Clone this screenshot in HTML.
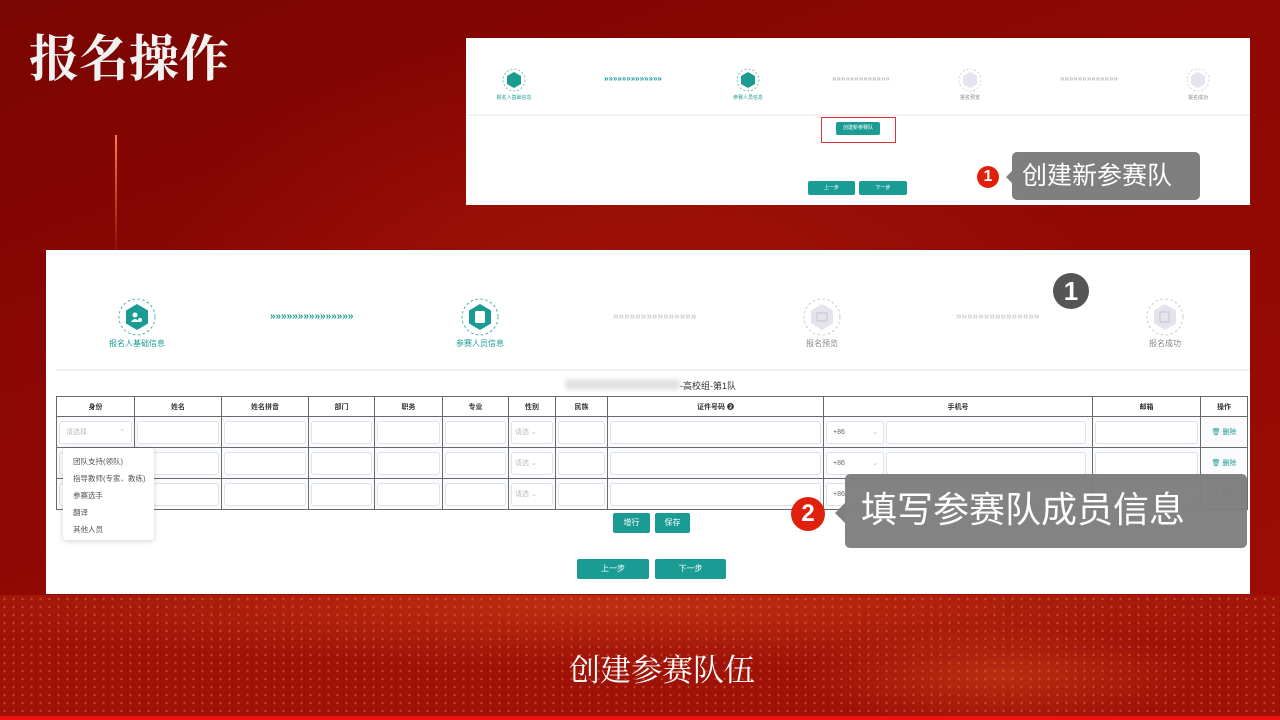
<!DOCTYPE html>
<html><head><meta charset="utf-8"><style>
*{margin:0;padding:0;box-sizing:border-box}
body{width:1280px;height:720px;overflow:hidden;position:relative;font-family:"Liberation Sans","Noto Sans CJK SC",sans-serif;
background:radial-gradient(ellipse 500px 300px at 640px 330px,#a31408 0%,rgba(163,20,8,0) 100%),linear-gradient(160deg,#7a0502 0%,#8e0803 40%,#960a03 70%,#a00e04 100%);}
.a{position:absolute}
.glow{left:0;top:595px;width:1280px;height:121px;background:radial-gradient(ellipse 700px 60px at 620px 10px,rgba(230,80,30,.45),rgba(0,0,0,0)),radial-gradient(ellipse 200px 50px at 1000px 80px,rgba(240,110,40,.3),rgba(0,0,0,0)),#9e1208;}
.dots{left:0;top:595px;width:1280px;height:121px;background-image:radial-gradient(circle,rgba(255,160,80,.7) 0.8px,rgba(0,0,0,0) 1.5px);background-size:9px 8px;opacity:.5}
.panel{background:#fff}
.teal{background:#1a9c95;color:#fff;border-radius:2px;text-align:center}
.lbl{font-size:8px;color:#1a9c95;text-align:center;width:100px}
.gl{color:#888}
.arr{position:absolute;font-weight:bold;white-space:nowrap}
table{border-collapse:collapse;table-layout:fixed;position:absolute;left:56px;top:396px;width:1191px}
td,th{border:1px solid #6a6a6a;font-size:7px;font-weight:bold;color:#333;text-align:center;padding:0 2px}
th{height:20px}
td{height:31px;background:#fafbfd}
.in{height:23px;border:1px solid #dde1e8;border-radius:3px;background:#fff;font-size:7px;color:#bbb;text-align:left;padding-left:6px;line-height:21px;font-weight:normal}
.dd{left:63px;top:448px;width:91px;height:92px;background:#fff;box-shadow:0 1px 6px rgba(0,0,0,.18);border-radius:3px;font-size:7.5px;color:#555;padding:5px 0 0 10px;line-height:17px}
.call{background:#7f7f7f;color:#fff;border-radius:5px}
.red{background:#e0200c;color:#fff;border-radius:50%;text-align:center;font-weight:bold}
</style></head><body>
<div class="a glow"></div><div class="a dots"></div>
<div class="a" style="left:0;top:716px;width:1280px;height:4px;background:#f01010"></div>
<div class="a" style="left:115px;top:135px;width:2px;height:115px;background:linear-gradient(#ff8040,rgba(200,40,10,.2))"></div>
<div class="a" style="left:29px;top:28px;font-family:'Liberation Serif','Noto Serif CJK SC',serif;font-size:50px;font-weight:bold;color:#f2f2f2;line-height:62px">报名操作</div>
<div class="a" style="left:0;top:645px;width:1324px;text-align:center;font-family:'Liberation Serif','Noto Serif CJK SC',serif;font-size:31px;color:#fff">创建参赛队伍</div>

<!-- top panel -->
<div class="a panel" style="left:466px;top:38px;width:784px;height:167px">
<svg class="a" style="left:0;top:0" width="784" height="167">
<g fill="none" stroke-dasharray="2 2">
<circle cx="48" cy="42" r="11" stroke="#1a9c95" stroke-width=".6"/><circle cx="282" cy="42" r="11" stroke="#1a9c95" stroke-width=".6"/>
<circle cx="504" cy="42" r="11" stroke="#bbb" stroke-width=".6"/><circle cx="732" cy="42" r="11" stroke="#bbb" stroke-width=".6"/></g>
<polygon points="48,34 55,38 55,46 48,50 41,46 41,38" fill="#1a9c95"/><polygon points="282,34 289,38 289,46 282,50 275,46 275,38" fill="#1a9c95"/>
<polygon points="504,34 511,38 511,46 504,50 497,46 497,38" fill="#e4e4ee"/><polygon points="732,34 739,38 739,46 732,50 725,46 725,38" fill="#e4e4ee"/>
<line x1="0" y1="77" x2="784" y2="77" stroke="#e8e8e8"/>
</svg>
<div class="arr" style="left:138px;top:36px;font-size:8px;color:#1a9c95">»»»»»»»»»»»»»</div>
<div class="arr" style="left:366px;top:36px;font-size:8px;color:#bbb">»»»»»»»»»»»»»</div>
<div class="arr" style="left:594px;top:36px;font-size:8px;color:#bbb">»»»»»»»»»»»»»</div>
<div class="a lbl" style="left:-2px;top:56px;font-size:5px">报名人基础信息</div>
<div class="a lbl" style="left:232px;top:56px;font-size:5px">参赛人员信息</div>
<div class="a lbl gl" style="left:454px;top:56px;font-size:5px">报名预览</div>
<div class="a lbl gl" style="left:682px;top:56px;font-size:5px">报名成功</div>
<div class="a" style="left:355px;top:79px;width:75px;height:26px;border:1.5px solid #d33"></div>
<div class="a teal" style="left:370px;top:84px;width:44px;height:13px;font-size:5px;line-height:13px">创建新参赛队</div>
<div class="a teal" style="left:342px;top:143px;width:47px;height:14px;font-size:5px;line-height:14px">上一步</div>
<div class="a teal" style="left:393px;top:143px;width:48px;height:14px;font-size:5px;line-height:14px">下一步</div>
<div class="a call" style="left:546px;top:114px;width:188px;height:48px;font-size:25px;line-height:48px;padding-left:10px">创建新参赛队</div>
<div class="a" style="left:540px;top:133px;width:0;height:0;border:6px solid transparent;border-right-color:#7f7f7f;border-left:0"></div>
<div class="a red" style="left:511px;top:128px;width:22px;height:22px;font-size:16px;line-height:22px">1</div>
</div>

<!-- main panel -->
<div class="a panel" style="left:46px;top:250px;width:1204px;height:344px"></div>
<svg class="a" style="left:46px;top:250px" width="1204" height="344">
<g fill="none" stroke-dasharray="2.5 2.5" stroke-width=".8">
<circle cx="91" cy="67" r="18" stroke="#1a9c95"/><circle cx="434" cy="67" r="18" stroke="#1a9c95"/>
<circle cx="776" cy="67" r="18" stroke="#bbb"/><circle cx="1119" cy="67" r="18" stroke="#bbb"/></g>
<polygon points="91,54 102,60.5 102,73.5 91,80 80,73.5 80,60.5" fill="#1a9c95"/>
<polygon points="434,54 445,60.5 445,73.5 434,80 423,73.5 423,60.5" fill="#1a9c95"/>
<polygon points="776,54 787,60.5 787,73.5 776,80 765,73.5 765,60.5" fill="#e4e4ee"/>
<polygon points="1119,54 1130,60.5 1130,73.5 1119,80 1108,73.5 1108,60.5" fill="#e4e4ee"/>
<circle cx="89" cy="65" r="2.5" fill="#fff"/><path d="M85 72 q4-6 8 0z" fill="#fff"/><circle cx="94" cy="70" r="2" fill="#fff"/>
<rect x="429" y="61" width="10" height="12" rx="1.5" fill="#fff"/>
<rect x="771" y="63" width="10" height="8" fill="none" stroke="#bbb" stroke-width=".8"/>
<rect x="1114" y="62" width="9" height="10" fill="none" stroke="#bbb" stroke-width=".8"/>
<line x1="10" y1="120" x2="1204" y2="120" stroke="#e3e3e3"/>
<circle cx="1025" cy="41" r="18" fill="#555"/>
<text x="1025" y="50" font-size="26" font-weight="bold" fill="#fff" text-anchor="middle" font-family="Liberation Sans">1</text>
</svg>
<div class="arr" style="left:270px;top:311px;font-size:10px;color:#1a9c95">»»»»»»»»»»»»»»»</div>
<div class="arr" style="left:613px;top:311px;font-size:10px;color:#ccc">»»»»»»»»»»»»»»»</div>
<div class="arr" style="left:956px;top:311px;font-size:10px;color:#ccc">»»»»»»»»»»»»»»»</div>
<div class="a lbl" style="left:87px;top:338px">报名人基础信息</div>
<div class="a lbl" style="left:430px;top:338px">参赛人员信息</div>
<div class="a lbl gl" style="left:772px;top:338px">报名预览</div>
<div class="a lbl gl" style="left:1115px;top:338px">报名成功</div>
<div class="a" style="left:565px;top:379px;width:115px;height:11px;background:#e2e2e2;filter:blur(2px);border-radius:4px"></div>
<div class="a" style="left:680px;top:379px;font-size:9px;color:#333">-高校组-第1队</div>

<table>
<colgroup><col style="width:78px"><col style="width:87px"><col style="width:87px"><col style="width:66px"><col style="width:68px"><col style="width:66px"><col style="width:47px"><col style="width:52px"><col style="width:216px"><col style="width:269px"><col style="width:108px"><col style="width:47px"></colgroup>
<tr><th>身份</th><th>姓名</th><th>姓名拼音</th><th>部门</th><th>职务</th><th>专业</th><th>性别</th><th>民族</th><th>证件号码 ❷</th><th>手机号</th><th>邮箱</th><th>操作</th></tr>
<tr><td><div class="in">请选择 <span style="float:right;padding-right:6px">⌃</span></div></td><td><div class="in"></div></td><td><div class="in"></div></td><td><div class="in"></div></td><td><div class="in"></div></td><td><div class="in"></div></td><td><div class="in" style="padding-left:3px">请选 ⌄</div></td><td><div class="in"></div></td><td><div class="in"></div></td><td style="text-align:left"><div class="in" style="width:58px;display:inline-block;color:#666">+86 <span style="float:right;padding-right:5px;color:#bbb">⌄</span></div> <div class="in" style="width:200px;display:inline-block;vertical-align:top"></div></td><td><div class="in"></div></td><td style="color:#1a9c95;font-weight:normal">🗑 删除</td></tr>
<tr><td><div class="in"></div></td><td><div class="in"></div></td><td><div class="in"></div></td><td><div class="in"></div></td><td><div class="in"></div></td><td><div class="in"></div></td><td><div class="in" style="padding-left:3px">请选 ⌄</div></td><td><div class="in"></div></td><td><div class="in"></div></td><td style="text-align:left"><div class="in" style="width:58px;display:inline-block;color:#666">+86 <span style="float:right;padding-right:5px;color:#bbb">⌄</span></div> <div class="in" style="width:200px;display:inline-block;vertical-align:top"></div></td><td><div class="in"></div></td><td style="color:#1a9c95;font-weight:normal">🗑 删除</td></tr>
<tr><td><div class="in"></div></td><td><div class="in"></div></td><td><div class="in"></div></td><td><div class="in"></div></td><td><div class="in"></div></td><td><div class="in"></div></td><td><div class="in" style="padding-left:3px">请选 ⌄</div></td><td><div class="in"></div></td><td><div class="in"></div></td><td style="text-align:left"><div class="in" style="width:58px;display:inline-block;color:#666">+86 <span style="float:right;padding-right:5px;color:#bbb">⌄</span></div> <div class="in" style="width:200px;display:inline-block;vertical-align:top"></div></td><td><div class="in"></div></td><td style="color:#1a9c95;font-weight:normal">🗑 删除</td></tr>
</table>
<div class="a dd">团队支持(领队)<br>指导教师(专家、教练)<br>参赛选手<br>翻译<br>其他人员</div>

<div class="a teal" style="left:613px;top:513px;width:37px;height:20px;font-size:8px;line-height:20px">增行</div>
<div class="a teal" style="left:655px;top:513px;width:35px;height:20px;font-size:8px;line-height:20px">保存</div>
<div class="a teal" style="left:577px;top:559px;width:72px;height:20px;font-size:8px;line-height:20px">上一步</div>
<div class="a teal" style="left:655px;top:559px;width:71px;height:20px;font-size:8px;line-height:20px">下一步</div>

<div class="a call" style="left:845px;top:474px;width:402px;height:74px;font-size:36px;line-height:72px;padding-left:16px;opacity:.97">填写参赛队成员信息</div>
<div class="a" style="left:835px;top:503px;width:0;height:0;border:10px solid transparent;border-right-color:#7f7f7f;border-left:0"></div>
<div class="a red" style="left:791px;top:497px;width:34px;height:34px;font-size:24px;line-height:34px">2</div>
</body></html>
